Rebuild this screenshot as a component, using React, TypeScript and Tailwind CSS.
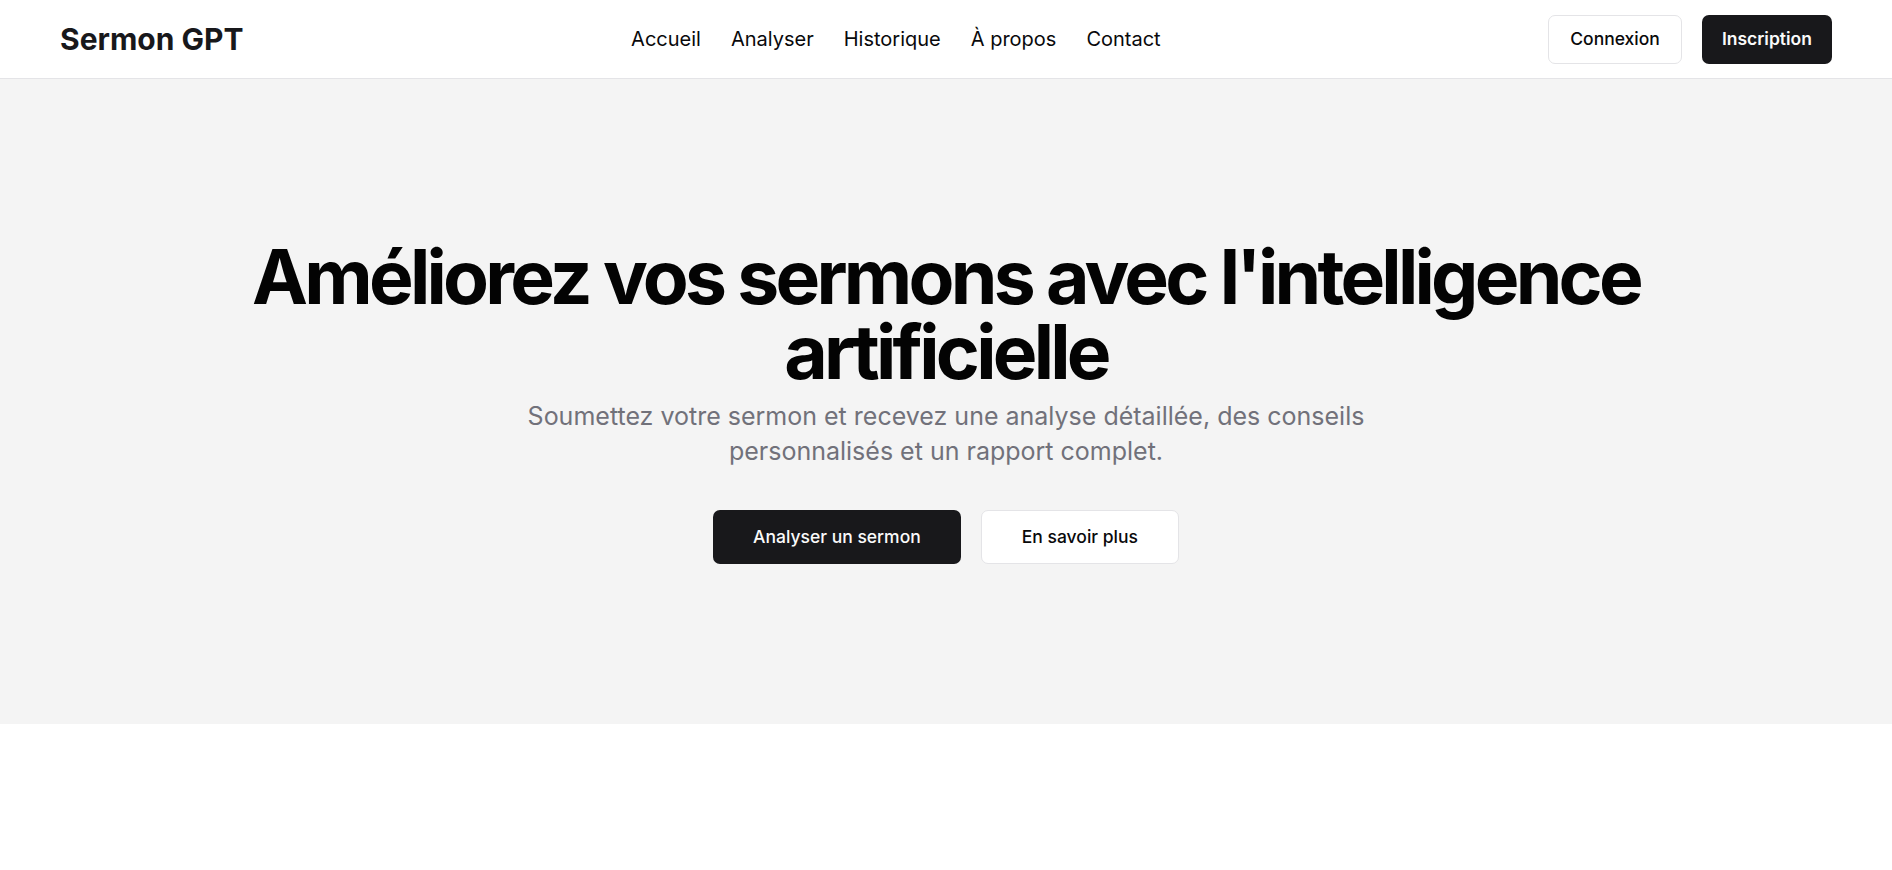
const navLinks = ['Accueil', 'Analyser', 'Historique', 'À propos', 'Contact'];

export default function App() {
  return (
    <div className="min-h-screen bg-white font-['Inter',sans-serif] text-[#09090b]">
      {/* Header */}
      <header className="h-[79px] border-b border-[#e4e4e7] bg-white">
        <div className="flex h-full items-center justify-between px-[60px]">
          <a href="#" className="text-[30px] font-bold leading-none text-[#18181b]">
            Sermon GPT
          </a>
          <nav className="flex items-center gap-[30px]">
            {navLinks.map((link) => (
              <a key={link} href="#" className="text-[20px] font-normal text-[#09090b]">
                {link}
              </a>
            ))}
          </nav>
          <div className="flex items-center gap-5">
            <button className="h-[49px] rounded-[7px] border border-[#e4e4e7] bg-white px-[21px] text-[17.5px] font-medium text-[#09090b]">
              Connexion
            </button>
            <button className="h-[49px] rounded-[7px] bg-[#18181b] px-5 text-[17.5px] font-semibold text-[#fafafa]">
              Inscription
            </button>
          </div>
        </div>
      </header>

      <main>
        {/* Hero */}
        <section className="bg-[#f4f4f4] py-[160px]">
          <div className="mx-auto flex max-w-[1600px] flex-col items-center px-10 text-center">
            <h1 className="max-w-[1520px] text-[75px] font-bold leading-none tracking-[-0.05em] text-[#030303]">
              Améliorez vos sermons avec l'intelligence artificielle
            </h1>
            <p className="mt-[10px] max-w-[842px] text-[25px] leading-[35px] text-[#71717a]">
              Soumettez votre sermon et recevez une analyse détaillée, des conseils personnalisés et un rapport complet.
            </p>
            <div className="mt-[41px] flex items-center gap-5">
              <button className="h-[54px] rounded-[7px] bg-[#18181b] px-10 text-[17.5px] font-medium text-[#fafafa]">
                Analyser un sermon
              </button>
              <button className="h-[54px] rounded-[7px] border border-[#e4e4e7] bg-white px-10 text-[17.5px] font-medium text-[#09090b]">
                En savoir plus
              </button>
            </div>
          </div>
        </section>

        {/* Next section (below the fold) */}
        <section className="h-[816px] bg-white" />
      </main>
    </div>
  );
}
